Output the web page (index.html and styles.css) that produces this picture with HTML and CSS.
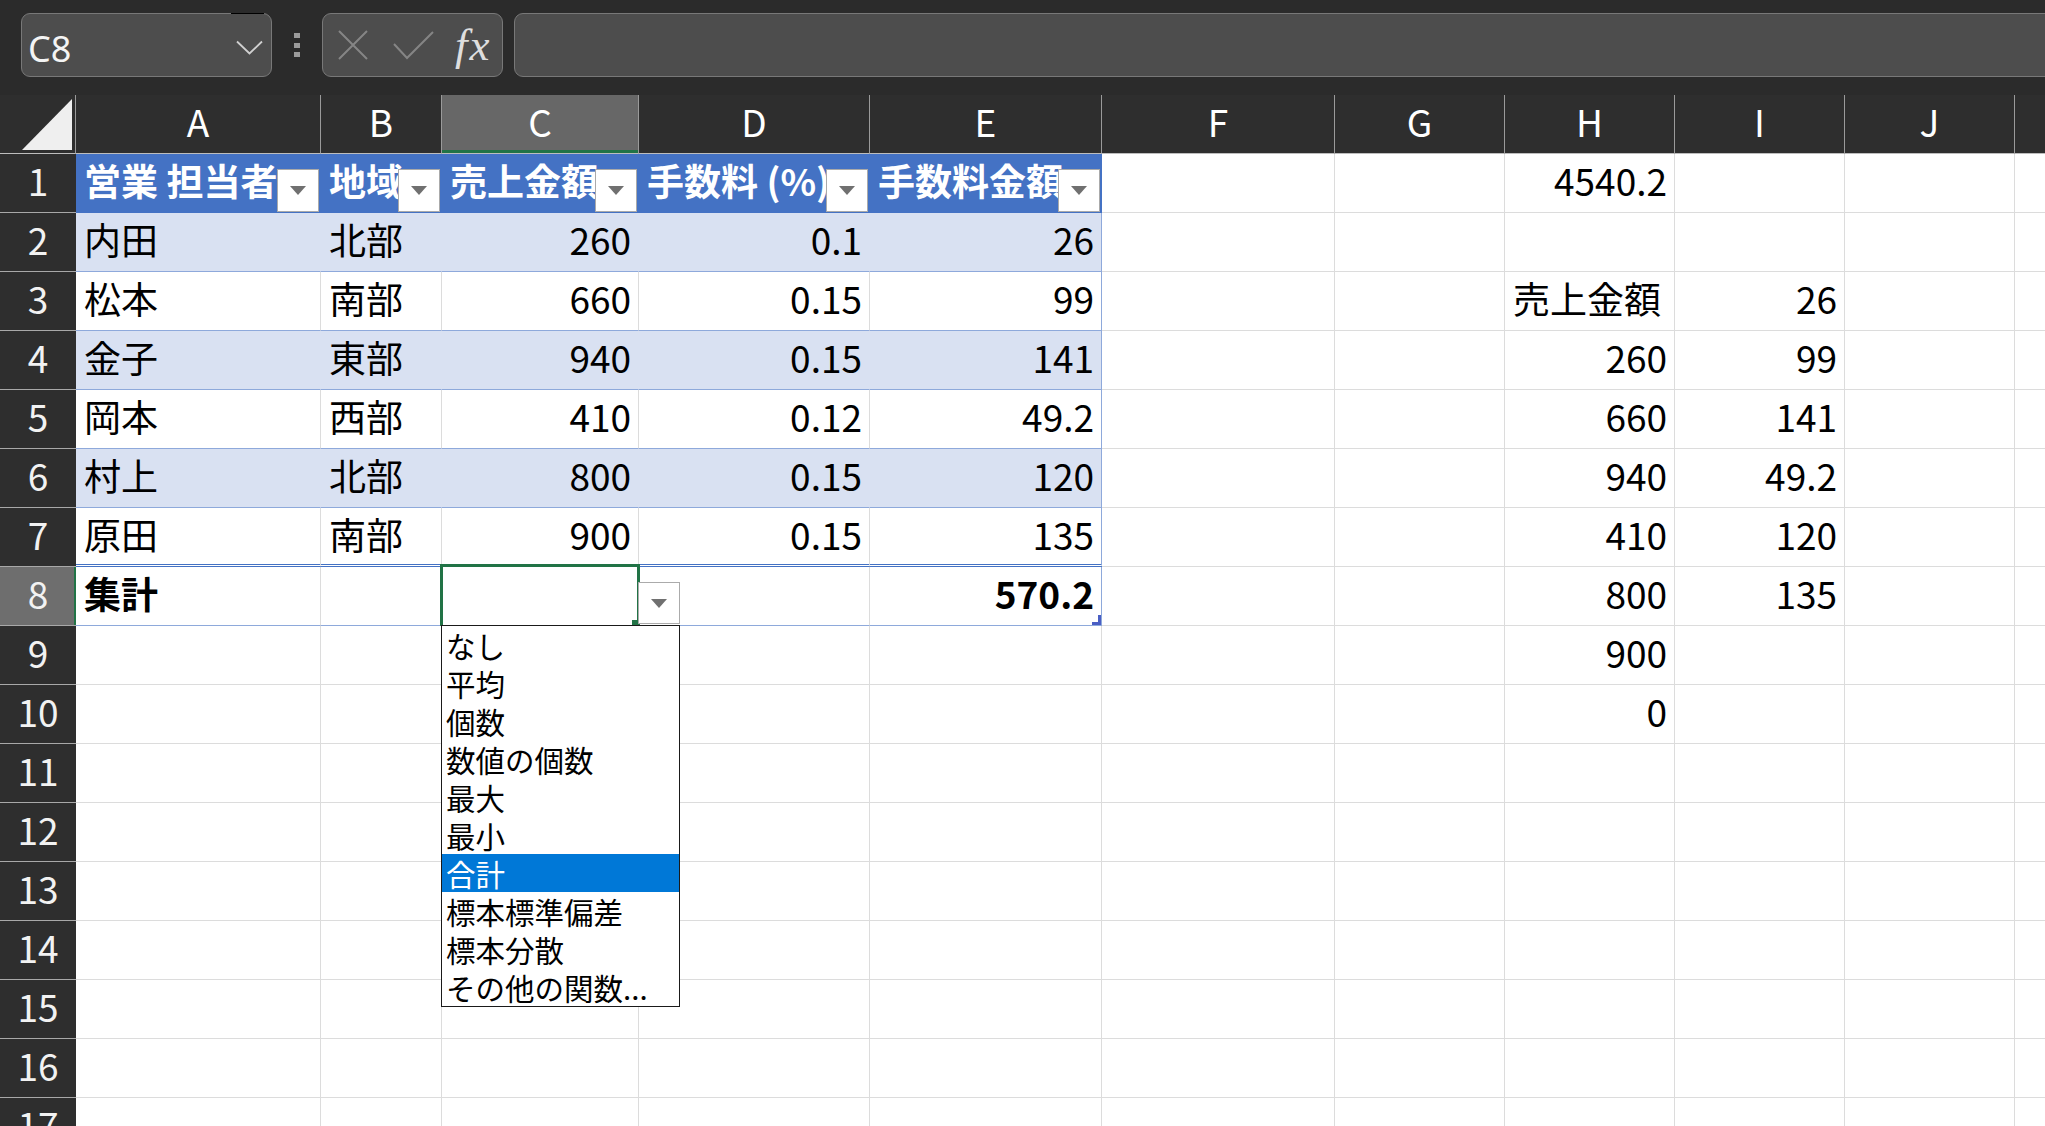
FILE: index.html
```html
<!DOCTYPE html>
<html lang="ja">
<head>
<meta charset="utf-8">
<title>Book1 - Excel</title>
<link rel="stylesheet" href="styles.css">
</head>
<body>
<div class="formula-row">
  <div class="namebox">
    <span class="namebox-text">C8</span>
    <svg class="chev" width="27" height="15" viewBox="0 0 27 15"><polyline points="1,1.5 13.5,13.5 26,1.5" fill="none" stroke="#d0d0d0" stroke-width="1.8"/></svg>
  </div>
  <div class="grip"><i></i><i></i><i></i></div>
  <div class="fxbox">
    <svg class="ico-x" width="30" height="30" viewBox="0 0 30 30"><path d="M1 1 L29 29 M29 1 L1 29" stroke="#858585" stroke-width="2" fill="none"/></svg>
    <svg class="ico-check" width="41" height="29" viewBox="0 0 41 29"><polyline points="1,13 14,27 40,1" stroke="#858585" stroke-width="2" fill="none"/></svg>
    <span class="fx">fx</span>
  </div>
  <div class="formula-input"></div>
</div>

<div class="sheet">
  <div class="row">
    <div class="corner"><svg width="76" height="58" viewBox="0 0 76 58"><polygon points="72,4 72,55 22,55" fill="#efefef"/></svg></div>
    <div class="ch">A</div><div class="ch">B</div><div class="ch on">C</div><div class="ch">D</div><div class="ch">E</div><div class="ch">F</div><div class="ch">G</div><div class="ch">H</div><div class="ch">I</div><div class="ch">J</div><div class="ch"></div>
  </div>

  <div class="row">
    <div class="rh">1</div>
    <div class="c th">営業 担当者<span class="fbtn"><b></b></span></div>
    <div class="c th">地域<span class="fbtn"><b></b></span></div>
    <div class="c th">売上金額<span class="fbtn"><b></b></span></div>
    <div class="c th">手数料 (%)<span class="fbtn"><b></b></span></div>
    <div class="c th">手数料金額<span class="fbtn"><b></b></span></div>
    <div class="c"></div><div class="c"></div><div class="c r">4540.2</div><div class="c"></div><div class="c"></div><div class="c"></div>
  </div>

  <div class="row">
    <div class="rh">2</div>
    <div class="c band">内田</div><div class="c band">北部</div><div class="c band r">260</div><div class="c band r">0.1</div><div class="c band r last">26</div>
    <div class="c"></div><div class="c"></div><div class="c"></div><div class="c"></div><div class="c"></div><div class="c"></div>
  </div>

  <div class="row">
    <div class="rh">3</div>
    <div class="c wt">松本</div><div class="c wt">南部</div><div class="c wt r">660</div><div class="c wt r">0.15</div><div class="c wt r last">99</div>
    <div class="c"></div><div class="c"></div><div class="c">売上金額</div><div class="c r">26</div><div class="c"></div><div class="c"></div>
  </div>

  <div class="row">
    <div class="rh">4</div>
    <div class="c band">金子</div><div class="c band">東部</div><div class="c band r">940</div><div class="c band r">0.15</div><div class="c band r last">141</div>
    <div class="c"></div><div class="c"></div><div class="c r">260</div><div class="c r">99</div><div class="c"></div><div class="c"></div>
  </div>

  <div class="row">
    <div class="rh">5</div>
    <div class="c wt">岡本</div><div class="c wt">西部</div><div class="c wt r">410</div><div class="c wt r">0.12</div><div class="c wt r last">49.2</div>
    <div class="c"></div><div class="c"></div><div class="c r">660</div><div class="c r">141</div><div class="c"></div><div class="c"></div>
  </div>

  <div class="row">
    <div class="rh">6</div>
    <div class="c band">村上</div><div class="c band">北部</div><div class="c band r">800</div><div class="c band r">0.15</div><div class="c band r last">120</div>
    <div class="c"></div><div class="c"></div><div class="c r">940</div><div class="c r">49.2</div><div class="c"></div><div class="c"></div>
  </div>

  <div class="row">
    <div class="rh">7</div>
    <div class="c wt dbl">原田</div><div class="c wt dbl">南部</div><div class="c wt dbl r">900</div><div class="c wt dbl r">0.15</div><div class="c wt dbl r last">135</div>
    <div class="c"></div><div class="c"></div><div class="c r">410</div><div class="c r">120</div><div class="c"></div><div class="c"></div>
  </div>

  <div class="row">
    <div class="rh on">8</div>
    <div class="c wt b">集計</div>
    <div class="c wt"></div>
    <div class="c wt sel">
      <span class="selbox"></span>
      <span class="handle"></span>
      <span class="ddbtn"><b></b></span>
      <ul class="ddlist">
        <li>なし</li>
        <li>平均</li>
        <li>個数</li>
        <li>数値の個数</li>
        <li>最大</li>
        <li>最小</li>
        <li class="on">合計</li>
        <li>標本標準偏差</li>
        <li>標本分散</li>
        <li>その他の関数...</li>
      </ul>
    </div>
    <div class="c wt"></div>
    <div class="c wt r b last total">570.2<span class="corner-mark"></span></div>
    <div class="c"></div><div class="c"></div><div class="c r">800</div><div class="c r">135</div><div class="c"></div><div class="c"></div>
  </div>

  <div class="row">
    <div class="rh">9</div>
    <div class="c"></div><div class="c"></div><div class="c"></div><div class="c"></div><div class="c"></div>
    <div class="c"></div><div class="c"></div><div class="c r">900</div><div class="c"></div><div class="c"></div><div class="c"></div>
  </div>

  <div class="row">
    <div class="rh">10</div>
    <div class="c"></div><div class="c"></div><div class="c"></div><div class="c"></div><div class="c"></div>
    <div class="c"></div><div class="c"></div><div class="c r">0</div><div class="c"></div><div class="c"></div><div class="c"></div>
  </div>

  <div class="row">
    <div class="rh">11</div>
    <div class="c"></div><div class="c"></div><div class="c"></div><div class="c"></div><div class="c"></div><div class="c"></div><div class="c"></div><div class="c"></div><div class="c"></div><div class="c"></div><div class="c"></div>
  </div>
  <div class="row">
    <div class="rh">12</div>
    <div class="c"></div><div class="c"></div><div class="c"></div><div class="c"></div><div class="c"></div><div class="c"></div><div class="c"></div><div class="c"></div><div class="c"></div><div class="c"></div><div class="c"></div>
  </div>
  <div class="row">
    <div class="rh">13</div>
    <div class="c"></div><div class="c"></div><div class="c"></div><div class="c"></div><div class="c"></div><div class="c"></div><div class="c"></div><div class="c"></div><div class="c"></div><div class="c"></div><div class="c"></div>
  </div>
  <div class="row">
    <div class="rh">14</div>
    <div class="c"></div><div class="c"></div><div class="c"></div><div class="c"></div><div class="c"></div><div class="c"></div><div class="c"></div><div class="c"></div><div class="c"></div><div class="c"></div><div class="c"></div>
  </div>
  <div class="row">
    <div class="rh">15</div>
    <div class="c"></div><div class="c"></div><div class="c"></div><div class="c"></div><div class="c"></div><div class="c"></div><div class="c"></div><div class="c"></div><div class="c"></div><div class="c"></div><div class="c"></div>
  </div>
  <div class="row">
    <div class="rh">16</div>
    <div class="c"></div><div class="c"></div><div class="c"></div><div class="c"></div><div class="c"></div><div class="c"></div><div class="c"></div><div class="c"></div><div class="c"></div><div class="c"></div><div class="c"></div>
  </div>
  <div class="row">
    <div class="rh">17</div>
    <div class="c"></div><div class="c"></div><div class="c"></div><div class="c"></div><div class="c"></div><div class="c"></div><div class="c"></div><div class="c"></div><div class="c"></div><div class="c"></div><div class="c"></div>
  </div>
</div>
</body>
</html>
```

FILE: styles.css
```css
* {
  box-sizing: border-box;
}

html,
body {
  margin: 0;
  padding: 0;
}

body {
  width: 2045px;
  height: 1126px;
  overflow: hidden;
  background: #2b2b2b;
  font-family: "Noto Sans CJK JP", "Noto Sans", sans-serif;
}

/* ---------- name box / formula bar ---------- */
.formula-row {
  display: flex;
  align-items: flex-start;
  height: 95px;
  padding: 13px 0 0 21px;
  background: #2b2b2b;
}

.namebox {
  position: relative;
  display: flex;
  align-items: center;
  flex: none;
  width: 251px;
  height: 64px;
  padding: 7px 8px 0 6px;
  border: 1px solid #787878;
  border-radius: 9px;
  background: #4d4d4d;
}

.namebox::before {
  content: "";
  position: absolute;
  top: -1px;
  left: 209px;
  width: 33px;
  height: 1px;
  background: #000;
}

.namebox-text {
  font-family: "Noto Sans", sans-serif;
  font-size: 36px;
  line-height: 36px;
  color: #f4f4f4;
}

.chev {
  display: block;
  margin-left: auto;
  margin-top: -2px;
}

.grip {
  display: flex;
  flex-direction: column;
  gap: 4.5px;
  flex: none;
  margin: 20px 22px 0 22px;
}

.grip i {
  display: block;
  width: 6px;
  height: 5px;
  background: #9b9b9b;
}

.fxbox {
  display: flex;
  align-items: center;
  flex: none;
  width: 181px;
  height: 64px;
  padding-left: 15px;
  border: 1px solid #787878;
  border-radius: 9px;
  background: #4d4d4d;
}

.ico-x,
.ico-check {
  display: block;
  flex: none;
}

.ico-check {
  margin-left: 25px;
}

.fx {
  margin-left: 21px;
  font-family: "Liberation Serif", serif;
  font-style: italic;
  font-size: 45px;
  line-height: 45px;
  letter-spacing: 2px;
  color: #dedede;
}

.formula-input {
  flex: 1;
  height: 64px;
  margin-left: 11px;
  margin-right: -30px;
  border: 1px solid #787878;
  border-radius: 9px;
  background: #4d4d4d;
}

/* ---------- grid ---------- */
.row {
  display: grid;
  grid-template-columns: 76px 245px 121px 197px 231px 232px 233px 170px 170px 170px 170px 170px;
  height: 59px;
}

.corner {
  border-right: 1px solid #9a9a9a;
  border-bottom: 1px solid #bdbdbd;
  background: #2e2e2e;
}

.corner svg {
  display: block;
}

.ch {
  border-right: 1px solid #9a9a9a;
  border-bottom: 1px solid #bdbdbd;
  background: #2e2e2e;
  color: #fff;
  text-align: center;
  font-size: 37px;
  line-height: 52px;
}

.ch.on {
  background: #676767;
  box-shadow: inset 0 -3px 0 #217346;
}

.rh {
  border-bottom: 1px solid #a8a8a8;
  background: #2e2e2e;
  color: #f2f2f2;
  text-align: center;
  font-size: 37px;
  line-height: 52px;
}

.rh.on {
  background: #6e6e6e;
  box-shadow: inset -2px 0 0 #217346;
}

.c {
  border-right: 1px solid #dcdcdc;
  border-bottom: 1px solid #dcdcdc;
  background: #fff;
  color: #000;
  padding: 0 7px 0 8px;
  font-size: 37px;
  line-height: 52px;
  white-space: nowrap;
  overflow: hidden;
}

.r {
  text-align: right;
}

.b {
  font-weight: 700;
}

/* ---------- table ---------- */
.th {
  position: relative;
  background: #4472c4;
  border-color: #4472c4;
  color: #fff;
  font-weight: 700;
}

.fbtn {
  position: absolute;
  right: 1px;
  bottom: 0;
  display: flex;
  align-items: center;
  justify-content: center;
  width: 42px;
  height: 43px;
  background: #fff;
  border: 1px solid #aaaaaa;
}

.fbtn b,
.ddbtn b {
  display: block;
  width: 0;
  height: 0;
  border-left: 8px solid transparent;
  border-right: 8px solid transparent;
  border-top: 9px solid #707070;
}

.band {
  background: #d9e1f2;
  border-right-color: #d9e1f2;
  border-bottom-color: #8ea9db;
}

.wt {
  border-bottom-color: #8ea9db;
}

.dbl {
  border-bottom: 3px double #4472c4;
}

.last {
  border-right-color: #8ea9db;
}

.total {
  position: relative;
}

.corner-mark {
  position: absolute;
  right: -1px;
  bottom: -1px;
  width: 10px;
  height: 11px;
  border-right: 4px solid #4a5ec4;
  border-bottom: 4px solid #4a5ec4;
}

/* ---------- selected cell with total dropdown ---------- */
.sel {
  position: relative;
  overflow: visible;
}

.selbox {
  position: absolute;
  left: -2px;
  top: -3px;
  width: 200px;
  height: 62px;
  border: 3px solid #217346;
  border-bottom: 0;
}

.handle {
  position: absolute;
  left: 190px;
  top: 53px;
  width: 8px;
  height: 8px;
  background: #217346;
}

.ddbtn {
  position: absolute;
  left: 196px;
  top: 15px;
  z-index: 4;
  display: flex;
  align-items: center;
  justify-content: center;
  width: 42px;
  height: 42px;
  background: #fff;
  border: 1px solid #ababab;
}

.ddlist {
  position: absolute;
  left: -1px;
  top: 58px;
  z-index: 5;
  width: 239px;
  height: 382px;
  margin: 0;
  padding: 0;
  list-style: none;
  background: #fff;
  border: 1px solid #1a1a1a;
}

.ddlist li {
  height: 38px;
  padding-left: 4px;
  font-size: 29.5px;
  line-height: 38px;
  font-weight: 400;
  color: #000;
  white-space: nowrap;
}

.ddlist li.on {
  background: #0078d7;
  color: #fff;
}
```
